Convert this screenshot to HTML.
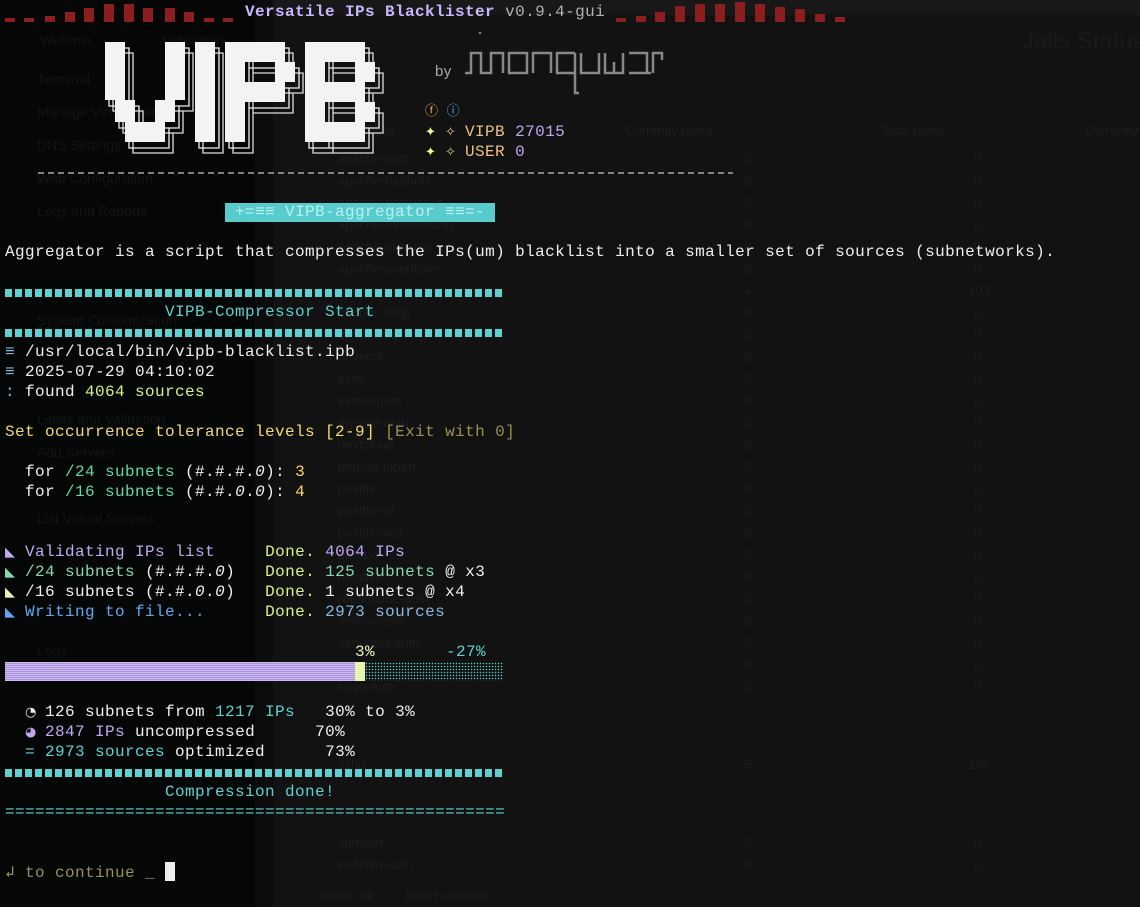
<!DOCTYPE html>
<html><head><meta charset="utf-8"><style>
*{margin:0;padding:0;box-sizing:border-box}
body{width:1140px;height:907px;overflow:hidden;background:#121212;position:relative;font-family:"Liberation Mono","DejaVu Sans Mono",monospace}
.side{position:absolute;left:0;top:0;width:255px;height:907px;background:#050707}
.strip{position:absolute;left:255px;top:0;width:18px;height:907px;background:#0c0c0c}
.topbar{position:absolute;left:0;top:0;width:1140px;height:15px;background:#181818}
.g{position:absolute;font-family:"Liberation Sans",sans-serif;color:#1d1d1d;font-size:13px;white-space:nowrap}
.gs{position:absolute;font-family:"Liberation Sans",sans-serif;color:#121515;font-size:14px;white-space:nowrap}
.l{position:absolute;left:5px;height:20px;line-height:20px;font-size:16px;letter-spacing:0.4px;white-space:pre;color:#e8e8e8}
.ic{display:inline-block;width:10px;text-align:center;font-family:"DejaVu Sans",sans-serif;font-size:13px;letter-spacing:0}
.t{color:#5fd0d0}.yg{color:#d7f08a}.y{color:#f0dc70}.ol{color:#9a9050}.gr{color:#5fd7af}.n{color:#ffd75f}
.lv{color:#c0a8f0}.bl{color:#5fa8f0}.lb{color:#87b8e0}.mg{color:#87d7b0}.w{color:#eeeeee}
.bar{position:absolute;top:0;width:10px;background:#8b1e1e}
.sq{position:absolute;left:5px;width:500px;height:8px;background:repeating-linear-gradient(90deg,#5fd0d0 0 7px,transparent 7px 10px)}
</style></head><body>
<div class="topbar"></div>
<div class="side"></div>
<div class="strip"></div>

<div class="gs" style="left:40px;top:32px">Webmin</div>
<div class="gs" style="left:162px;top:32px">Virtualmin</div>
<div class="gs" style="left:37px;top:71px">Terminal</div>
<div class="gs" style="left:37px;top:104px">Manage Virtual Server</div>
<div class="gs" style="left:37px;top:137px">DNS Settings</div>
<div class="gs" style="left:37px;top:170px">Web Configuration</div>
<div class="gs" style="left:37px;top:203px">Logs and Reports</div>
<div class="gs" style="left:37px;top:312px">System Customization</div>
<div class="gs" style="left:37px;top:411px">Limits and Validation</div>
<div class="gs" style="left:37px;top:444px">Add Servers</div>
<div class="gs" style="left:37px;top:510px">List Virtual Servers</div>
<div class="gs" style="left:37px;top:642px">Logs</div>
<div class="g" style="left:1022px;top:28px;font-size:24px;color:#1a1a1a">Jails Status</div>
<div class="g" style="left:335px;top:123px">Jail blocks</div>
<div class="g" style="left:625px;top:123px">Currently failed</div>
<div class="g" style="left:882px;top:123px">Total failed</div>
<div class="g" style="left:1085px;top:123px">Currently</div>
<div class="g" style="left:320px;top:888px">Select all</div>
<div class="g" style="left:405px;top:888px">Invert selection</div>
<div id="rows"></div>
<script>
var names=["apache-auth","apache-badbots","apache-botsearch","apache-modsecurity","apache-nohome","apache-overflows","asterisk","courier-smtp","cyrus-imap","dovecot","exim","exim-spam","mysqld-auth","nextcloud","php-url-fopen","postfix","postfix-rbl","postfix-sasl","proftpd","recidive","roundcube-auth","selinux-ssh","sendmail-auth","sieve","sogo-auth"];
var h="";
for(var i=0;i<names.length;i++){var y=151+22*i;var a=i==6?"4":"0",b=i==6?"103":"0";
h+='<div class="g" style="left:338px;top:'+y+'px">'+names[i]+'</div><div class="g" style="left:744px;top:'+y+'px">'+a+'</div><div class="g" style="left:'+(b.length>1?968:974)+'px;top:'+y+'px">'+b+'</div>';}
[["sshd",757,"5","186"],["suhosin",835,"0","0"],["webmin-auth",857,"0","0"]].forEach(function(r){h+='<div class="g" style="left:338px;top:'+r[1]+'px">'+r[0]+'</div><div class="g" style="left:744px;top:'+r[1]+'px">'+r[2]+'</div><div class="g" style="left:'+(r[3].length>1?968:974)+'px;top:'+r[1]+'px">'+r[3]+'</div>';});
document.getElementById("rows").innerHTML=h;
</script>

<div class="bar" style="left:5px;top:18px;height:4px"></div>
<div class="bar" style="left:24px;top:18px;height:4px"></div>
<div class="bar" style="left:45px;top:16px;height:6px"></div>
<div class="bar" style="left:65px;top:12px;height:10px"></div>
<div class="bar" style="left:84px;top:8px;height:14px"></div>
<div class="bar" style="left:104px;top:4px;height:18px"></div>
<div class="bar" style="left:124px;top:4px;height:18px"></div>
<div class="bar" style="left:143px;top:8px;height:14px"></div>
<div class="bar" style="left:165px;top:8px;height:14px"></div>
<div class="bar" style="left:184px;top:12px;height:10px"></div>
<div class="bar" style="left:204px;top:18px;height:4px"></div>
<div class="bar" style="left:223px;top:18px;height:4px"></div>
<div class="bar" style="left:616px;top:18px;height:4px"></div>
<div class="bar" style="left:636px;top:16px;height:6px"></div>
<div class="bar" style="left:655px;top:12px;height:10px"></div>
<div class="bar" style="left:675px;top:6px;height:16px"></div>
<div class="bar" style="left:695px;top:4px;height:18px"></div>
<div class="bar" style="left:715px;top:4px;height:18px"></div>
<div class="bar" style="left:735px;top:2px;height:20px"></div>
<div class="bar" style="left:755px;top:4px;height:18px"></div>
<div class="bar" style="left:775px;top:7px;height:15px"></div>
<div class="bar" style="left:795px;top:9px;height:13px"></div>
<div class="bar" style="left:815px;top:14px;height:8px"></div>
<div class="bar" style="left:835px;top:17px;height:5px"></div>

<svg style="position:absolute;left:0;top:0" width="800" height="240">
<defs><g id="lg">
<path d="M105 42h20v58h-20z M165 42h20v58h-20z M115 100h20v22h-20z M155 100h20v22h-20z M125 122h40v20h-40z"/>
<path d="M195 42h20v100h-20z"/>
<path d="M225 42h20v100h-20z M245 42h40v20h-40z M275 62h20v20h-20z M245 82h40v20h-40z"/>
<path d="M305 42h20v100h-20z M325 42h40v20h-40z M355 62h20v20h-20z M325 82h40v20h-40z M355 102h20v20h-20z M325 122h40v20h-40z"/>
</g></defs>
<g fill="none" stroke="#ddd" stroke-width="1.3" transform="translate(8,11)"><use href="#lg"/></g>
<g fill="none" stroke="#eee" stroke-width="1.3" transform="translate(4,6)"><use href="#lg"/></g>
<g fill="#f2f4f4"><use href="#lg"/></g>
<path d="M465 73H471V53H481V73H491V53H503V73 M509 53H527V73H509Z M533 73V53H551V73 M575 53H557V73H575V53V93H579 M581 53V73H599V53 M605 53V73H623V53 M614 73V62 M629 53H647V73H629 M647 73H651 M653 73V53H662V60" fill="none" stroke="#888" stroke-width="2.5"/>
<circle cx="480" cy="33" r="1.2" fill="#888"/>
<line x1="38" y1="173" x2="733" y2="173" stroke="#aaa" stroke-width="1.5" stroke-dasharray="6,4"/>
</svg>

<div class="l" style="top:2px;left:245px"><b style="color:#c8b4ff">Versatile IPs Blacklister</b> <span style="color:#b0b0b0">v0.9.4-gui</span></div>
<div class="l" style="top:62px;left:435px;color:#aaa;font-family:'Liberation Sans',sans-serif;font-size:15px">by</div>
<div class="l" style="top:102px;left:425px;font-size:13px"><span style="color:#f0b060">ⓕ</span> <span style="color:#5fa8f0">ⓘ</span></div>
<div class="l" style="top:122px;left:425px"><span class="ic" style="color:#eaff90">✦</span> <span class="ic" style="color:#f0c080">✧</span> <span style="color:#f0c080">VIPB</span> <span class="lv">27015</span></div>
<div class="l" style="top:142px;left:425px"><span class="ic" style="color:#eaff90">✦</span> <span class="ic" style="color:#f0c080">✧</span> <span style="color:#f0c080">USER</span> <span class="lv">0</span></div>
<div style="position:absolute;left:225px;top:203px;width:270px;height:19px;background:#58cccc"></div>
<div class="l" style="top:202px;left:225px;width:270px;text-align:center;color:#b8f0f0">+=≡≡ VIPB-aggregator ≡≡=-</div>

<div class="l w" style="top:242px">Aggregator is a script that compresses the IPs(um) blacklist into a smaller set of sources (subnetworks).</div>
<div class="sq" style="top:289px"></div>
<div class="l t" style="top:302px">                VIPB-Compressor Start</div>
<div class="sq" style="top:329px"></div>
<div class="l w" style="top:342px"><span class="lb">≡</span> /usr/local/bin/vipb-blacklist.ipb</div>
<div class="l w" style="top:362px"><span class="lb">≡</span> 2025-07-29 04:10:02</div>
<div class="l w" style="top:382px"><span class="lb">:</span> found <span class="yg">4064 sources</span></div>
<div class="l y" style="top:422px">Set occurrence tolerance levels [2-9] <span class="ol">[Exit with 0]</span></div>
<div class="l w" style="top:462px">  for <span class="gr">/24 subnets</span> (#.#.#.<i>0</i>): <span class="n">3</span></div>
<div class="l w" style="top:482px">  for <span class="gr">/16 subnets</span> (#.#.<i>0</i>.<i>0</i>): <span class="n">4</span></div>
<div class="l" style="top:542px"><span class="ic lv">◣</span> <span class="lv">Validating IPs list</span>     <span class="yg">Done.</span> <span class="lv">4064 IPs</span></div>
<div class="l" style="top:562px"><span class="ic mg">◣</span> <span class="mg">/24 subnets</span> <span class="w">(#.#.#.<i>0</i>)</span>   <span class="yg">Done.</span> <span class="mg">125 subnets</span> <span class="w">@ x3</span></div>
<div class="l w" style="top:582px"><span class="ic" style="color:#e8f0c0">◣</span> /16 subnets (#.#.<i>0</i>.<i>0</i>)   <span class="yg">Done.</span> 1 subnets @ x4</div>
<div class="l" style="top:602px"><span class="ic bl">◣</span> <span class="bl">Writing to file...</span>      <span class="yg">Done.</span> <span class="lb">2973 sources</span></div>
<div class="l" style="top:642px"><span style="position:absolute;left:350px;color:#f0f0c0">3%</span><span style="position:absolute;left:441px" class="t">-27%</span></div>
<div style="position:absolute;left:5px;top:662px;width:350px;height:19px;background:repeating-linear-gradient(0deg,#d0b8f8 0 1px,#a894d0 1px 2px)"></div>
<div style="position:absolute;left:355px;top:662px;width:10px;height:19px;background:#e8f4b0"></div>
<div style="position:absolute;left:365px;top:662px;width:138px;height:19px;background:radial-gradient(circle,#5fc8c8 0.6px,transparent 0.9px) 0 0/3px 3px"></div>
<div class="l w" style="top:702px">  <span class="ic">◔</span> 126 subnets from <span class="t">1217 IPs</span>   30% to 3%</div>
<div class="l w" style="top:722px">  <span class="ic lv">◕</span> <span class="lv">2847 IPs</span> uncompressed      70%</div>
<div class="l w" style="top:742px">  <span class="t">= 2973 sources</span> optimized      73%</div>
<div class="sq" style="top:769px"></div>
<div class="l t" style="top:782px">                Compression done!</div>
<div class="l t" style="top:802px">==================================================</div>
<div class="l ol" style="top:862px">↲ to continue _ <span style="display:inline-block;width:10px;height:19px;background:#eee;vertical-align:-4px"></span></div>
</body></html>
